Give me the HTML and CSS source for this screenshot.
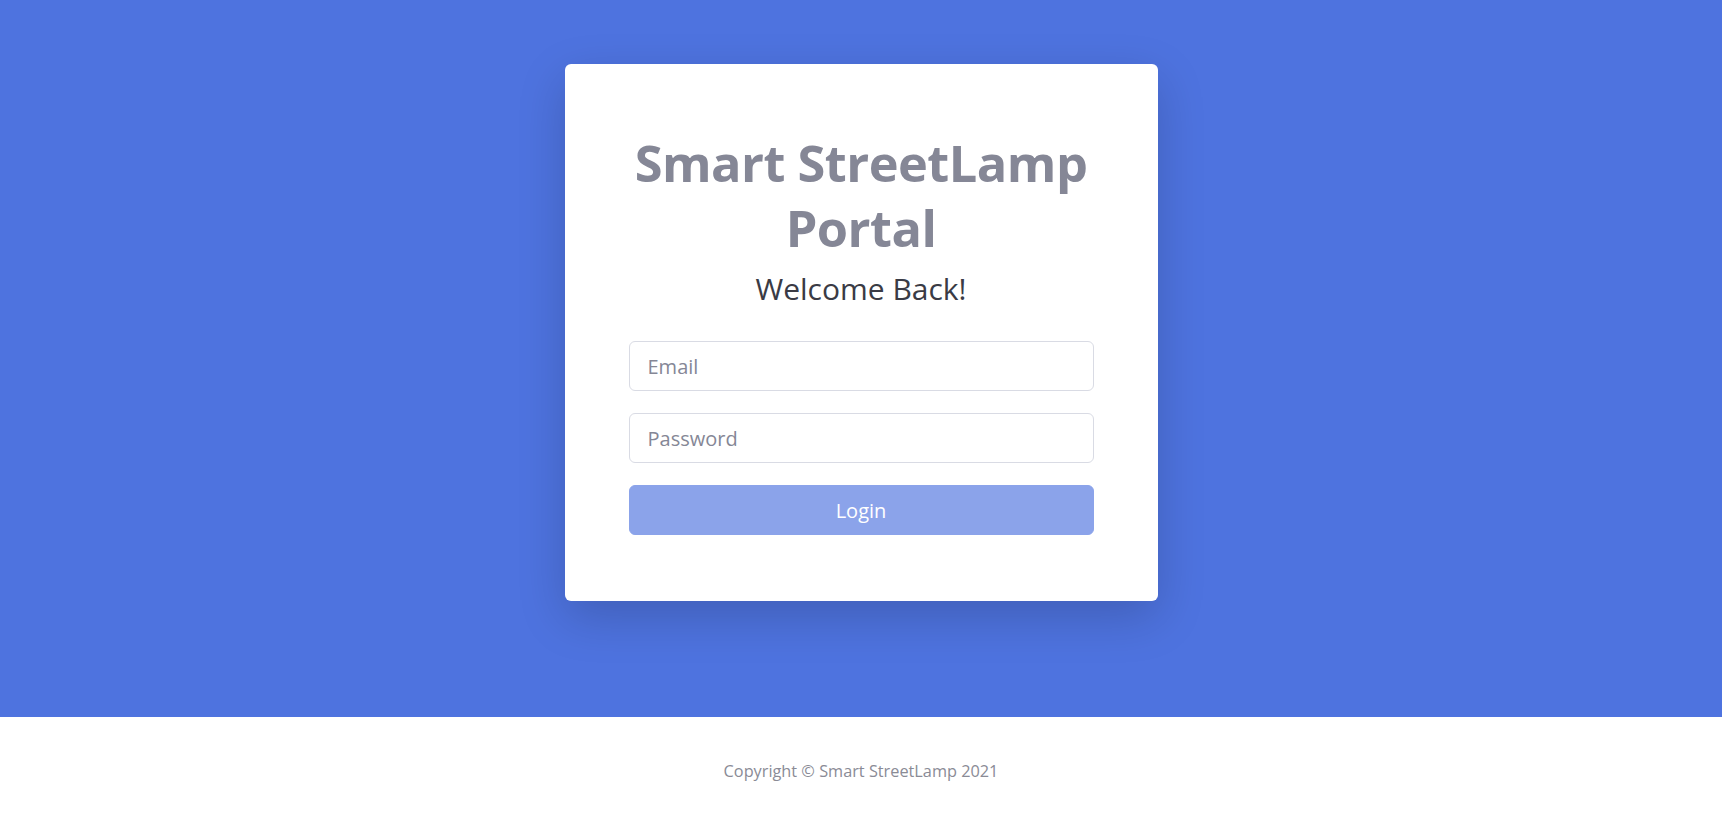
FILE: index.html
```html
<!DOCTYPE html>
<html lang="en">
<head>
<meta charset="utf-8">
<title>Smart StreetLamp Portal</title>
<link rel="stylesheet" href="styles.css">
</head>
<body>
<main class="hero">
  <div class="card">
    <h1 class="title">Smart StreetLamp Portal</h1>
    <h2 class="welcome">Welcome Back!</h2>
    <form class="form">
      <input class="field" type="email" placeholder="Email">
      <input class="field" type="password" placeholder="Password">
      <button class="btn" type="button" disabled>Login</button>
    </form>
  </div>
</main>
<footer class="footer">
  <span>Copyright © Smart StreetLamp 2021</span>
</footer>
</body>
</html>
```

FILE: styles.css
```css
* { box-sizing: border-box; }
html, body { margin: 0; padding: 0; }
body {
  font-family: "Open Sans", "Noto Sans", sans-serif;
  background: #fff;
  height: 819px;
  overflow: hidden;
}
.hero {
  height: 717px;
  background: #4e73df;
  display: flex;
  justify-content: center;
  align-items: flex-start;
  padding-top: 64px;
}
.card {
  width: 593px;
  background: #fff;
  border-radius: 6px;
  box-shadow: 0 1rem 3rem rgba(0, 0, 0, 0.175);
  padding: 66px 60px 66px;
  display: flex;
  flex-direction: column;
  align-items: stretch;
}
.title {
  margin: 0 -10px;
  text-align: center;
  color: #858796;
  font-weight: 700;
  font-size: 50.5px;
  letter-spacing: -0.5px;
  line-height: 65px;
}
.welcome {
  margin: 7px 0 30px;
  text-align: center;
  color: #3a3b45;
  font-weight: 400;
  font-size: 30px;
  line-height: 44px;
}
.form {
  display: flex;
  flex-direction: column;
  gap: 22px;
  padding: 0 4px;
}
.field {
  height: 50px;
  width: 100%;
  border: 1px solid #d9dbe4;
  border-radius: 6px;
  padding: 0 18px;
  font-family: inherit;
  font-size: 20px;
  color: #6e707e;
  background: #fff;
}
.field::placeholder { color: #858796; }
.btn {
  height: 50px;
  width: 100%;
  border: 1px solid #4e73df;
  border-radius: 6px;
  background: #4e73df;
  opacity: 0.65;
  color: #fff;
  font-family: inherit;
  font-size: 20px;
}
.footer {
  height: 102px;
  display: flex;
  align-items: center;
  justify-content: center;
  color: #8a8b96;
  font-size: 16.3px;
  padding-top: 6px;
}
```
